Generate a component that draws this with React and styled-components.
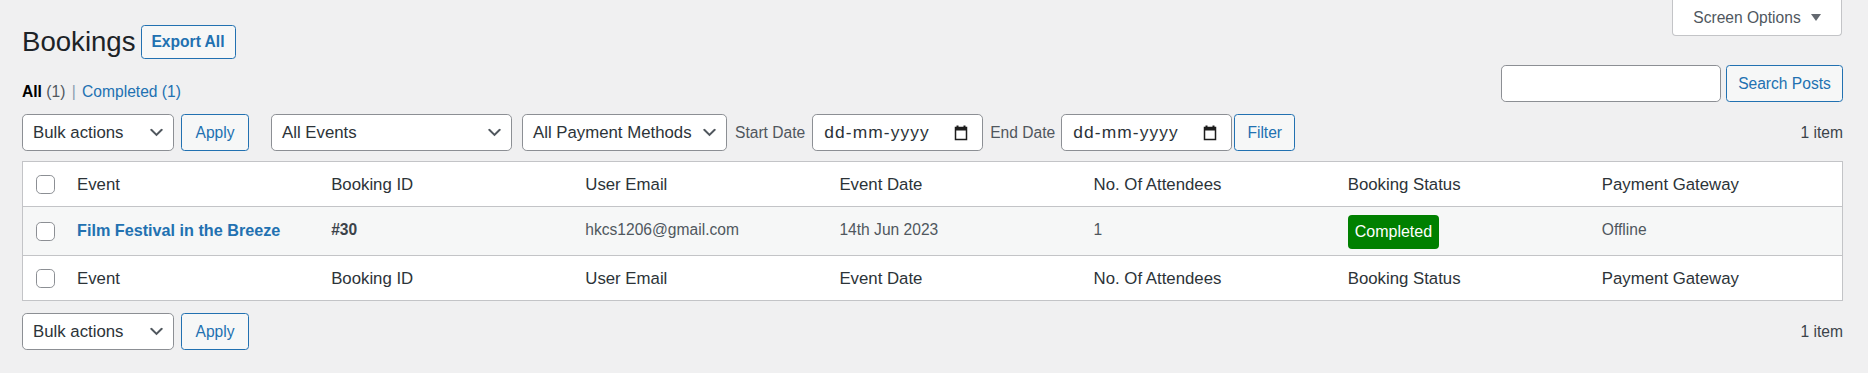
import styled, { createGlobalStyle } from "styled-components";

const GlobalStyle = createGlobalStyle`
  * { box-sizing: border-box; }
  body {
    margin: 0;
    background: #f0f0f1;
    color: #3c434a;
    font-family: "Liberation Sans", Arial, sans-serif;
    font-size: 15.6px;
  }
`

const columns = ["Event", "Booking ID", "User Email", "Event Date", "No. Of Attendees", "Booking Status", "Payment Gateway"]

function Chevron() {
    return (
        <svg width="19" height="19" viewBox="0 0 20 20">
            <path d="M5 6l5 5 5-5 2 1-7 7-7-7 2-1z" fill="#50575e" />
        </svg>
    )
}

function CalendarIcon() {
    return (
        <svg width="14" height="16" viewBox="0 0 14 16">
            <rect x="2.5" y="0.5" width="2" height="3" fill="#1d1d1d" />
            <rect x="9.5" y="0.5" width="2" height="3" fill="#1d1d1d" />
            <rect x="1.5" y="2.5" width="11" height="12" fill="none" stroke="#1d1d1d" strokeWidth="1.5" />
            <rect x="1.5" y="2.5" width="11" height="3" fill="#1d1d1d" />
        </svg>
    )
}

function BulkBar({ children }) {
    return (
        <Tablenav>
            <Select $w={152}>Bulk actions<Chevron /></Select>
            <Button $w={68} $ml={7}>Apply</Button>
            {children}
            <Count>1 item</Count>
        </Tablenav>
    )
}

function HeadRow({ top }) {
    return (
        <Row $h={44} $top={top}>
            <CheckCell><Checkbox /></CheckCell>
            {columns.map(c => <HeadCell key={c}>{c}</HeadCell>)}
        </Row>
    )
}

export default function App() {
    return (
        <Page>
            <GlobalStyle />
            <Header>
                <TitleGroup>
                    <Title>Bookings</Title>
                    <ExportButton>Export All</ExportButton>
                </TitleGroup>
                <ScreenTab>Screen Options<Triangle /></ScreenTab>
            </Header>

            <ViewsBar>
                <Views>
                    <Current>All</Current> <Muted>(1)</Muted> <Sep>|</Sep> <ViewLink>Completed (1)</ViewLink>
                </Views>
                <SearchBox>
                    <SearchInput />
                    <Button $w={117}>Search Posts</Button>
                </SearchBox>
            </ViewsBar>

            <BulkBar>
                <Select $w={241} $ml={22}>All Events<Chevron /></Select>
                <Select $w={205} $ml={10}>All Payment Methods<Chevron /></Select>
                <Label $ml={8}>Start Date</Label>
                <DateField $ml={7}>dd-mm-yyyy<CalendarIcon /></DateField>
                <Label $ml={7}>End Date</Label>
                <DateField $ml={6}>dd-mm-yyyy<CalendarIcon /></DateField>
                <Button $w={61} $ml={2}>Filter</Button>
            </BulkBar>

            <Table>
                <HeadRow top />
                <DataRow>
                    <CheckCell><Checkbox /></CheckCell>
                    <Cell><RowTitle>Film Festival in the Breeze</RowTitle></Cell>
                    <Cell><strong>#30</strong></Cell>
                    <Cell>hkcs1206@gmail.com</Cell>
                    <Cell>14th Jun 2023</Cell>
                    <Cell>1</Cell>
                    <Cell><Badge>Completed</Badge></Cell>
                    <Cell>Offline</Cell>
                </DataRow>
                <HeadRow />
            </Table>

            <Bottom>
                <BulkBar />
            </Bottom>
        </Page>
    )
}

const Page = styled.div`
width: 1868px;
min-height: 373px;
padding: 0 25px 0 22px;
`

const Header = styled.div`
display: flex;
justify-content: space-between;
align-items: flex-start;
`

const TitleGroup = styled.div`
display: flex;
align-items: center;
height: 34px;
margin-top: 25px;
`

const Title = styled.h1`
margin: 0;
font-size: 27.6px;
font-weight: 400;
line-height: 36px;
color: #1d2327;
`

const ExportButton = styled.button`
margin-left: 5px;
height: 34px;
width: 95px;
padding: 0;
border: 1px solid #2271b1;
border-radius: 3.6px;
background: #f6f7f7;
color: #2271b1;
font-family: inherit;
font-size: 15.6px;
font-weight: 700;
`

const ScreenTab = styled.div`
display: flex;
align-items: center;
justify-content: center;
gap: 10px;
width: 170px;
height: 36px;
margin-right: 1px;
background: #fff;
border: 1px solid #c3c4c7;
border-top: none;
border-radius: 0 0 4px 4px;
color: #50575e;
font-size: 15.6px;
`

const Triangle = styled.span`
width: 0;
height: 0;
border-left: 5px solid transparent;
border-right: 5px solid transparent;
border-top: 7px solid #646970;
`

const ViewsBar = styled.div`
display: flex;
justify-content: space-between;
align-items: flex-end;
height: 37px;
margin-top: 6px;
`

const Views = styled.div`
line-height: 20px;
font-size: 15.6px;
color: #646970;
white-space: pre;
`

const Current = styled.span`
color: #000;
font-weight: 700;
`

const Muted = styled.span`
color: #50575e;
`

const Sep = styled.span`
color: #8a9bb0;
padding: 0 2px;
`

const ViewLink = styled.span`
color: #2271b1;
`

const SearchBox = styled.div`
display: flex;
gap: 5px;
`

const SearchInput = styled.div`
width: 220px;
height: 37px;
background: #fff;
border: 1px solid #8c8f94;
border-radius: 4.8px;
`

const Button = styled.button`
width: ${p => p.$w}px;
height: 37px;
margin-left: ${p => p.$ml || 0}px;
padding: 0;
border: 1px solid #2271b1;
border-radius: 3.6px;
background: #f6f7f7;
color: #2271b1;
font-family: inherit;
font-size: 15.6px;
flex-shrink: 0;
`

const Tablenav = styled.div`
display: flex;
align-items: center;
height: 37px;
margin-top: 12px;
`

const Select = styled.div`
display: flex;
align-items: center;
justify-content: space-between;
width: ${p => p.$w}px;
height: 37px;
margin-left: ${p => p.$ml || 0}px;
padding: 0 7px 0 10px;
background: #fff;
border: 1px solid #8c8f94;
border-radius: 4.8px;
color: #2c3338;
font-size: 16.8px;
white-space: nowrap;
flex-shrink: 0;
`

const Label = styled.span`
margin-left: ${p => p.$ml || 0}px;
color: #50575e;
font-size: 15.6px;
white-space: nowrap;
`

const DateField = styled.div`
display: flex;
align-items: center;
justify-content: space-between;
width: 171px;
height: 37px;
margin-left: ${p => p.$ml || 0}px;
padding: 0 14px 0 11px;
background: #fff;
border: 1px solid #8c8f94;
border-radius: 4.8px;
color: #2c3338;
font-size: 17.4px;
letter-spacing: 1.1px;
flex-shrink: 0;
`

const Count = styled.span`
margin-left: auto;
color: #3c434a;
font-size: 15.6px;
`

const Table = styled.div`
margin-top: 10px;
background: #fff;
border: 1px solid #c3c4c7;
`

const Row = styled.div`
display: grid;
grid-template-columns: 40px repeat(7, 1fr);
height: ${p => p.$h + 1}px;
background: #fff;
border-${p => (p.$top ? "bottom" : "top")}: 1px solid #c3c4c7;
`

const DataRow = styled.div`
display: grid;
grid-template-columns: 40px repeat(7, 1fr);
height: 48px;
background: #f6f7f7;
`

const CheckCell = styled.div`
display: flex;
align-items: center;
padding-left: 13px;
`

const Checkbox = styled.span`
width: 19px;
height: 19px;
background: #fff;
border: 1px solid #8c8f94;
border-radius: 4.8px;
`

const HeadCell = styled.div`
display: flex;
align-items: center;
padding: 2px 0 0 14px;
color: #2c3338;
font-size: 16.8px;
white-space: nowrap;
`

const Cell = styled.div`
display: flex;
align-items: center;
padding: 0 0 2px 14px;
color: #50575e;
font-size: 15.6px;
white-space: nowrap;

strong {
    font-weight: 700;
    color: #3c434a;
}
`

const RowTitle = styled.span`
color: #2271b1;
font-weight: 700;
font-size: 16.2px;
`

const Badge = styled.span`
display: inline-flex;
align-items: center;
height: 34px;
margin-top: 3px;
padding: 0 7px;
background: #008000;
border-radius: 4px;
color: #fff;
font-size: 16px;
`

const Bottom = styled.div`
margin-top: 4px;
`
